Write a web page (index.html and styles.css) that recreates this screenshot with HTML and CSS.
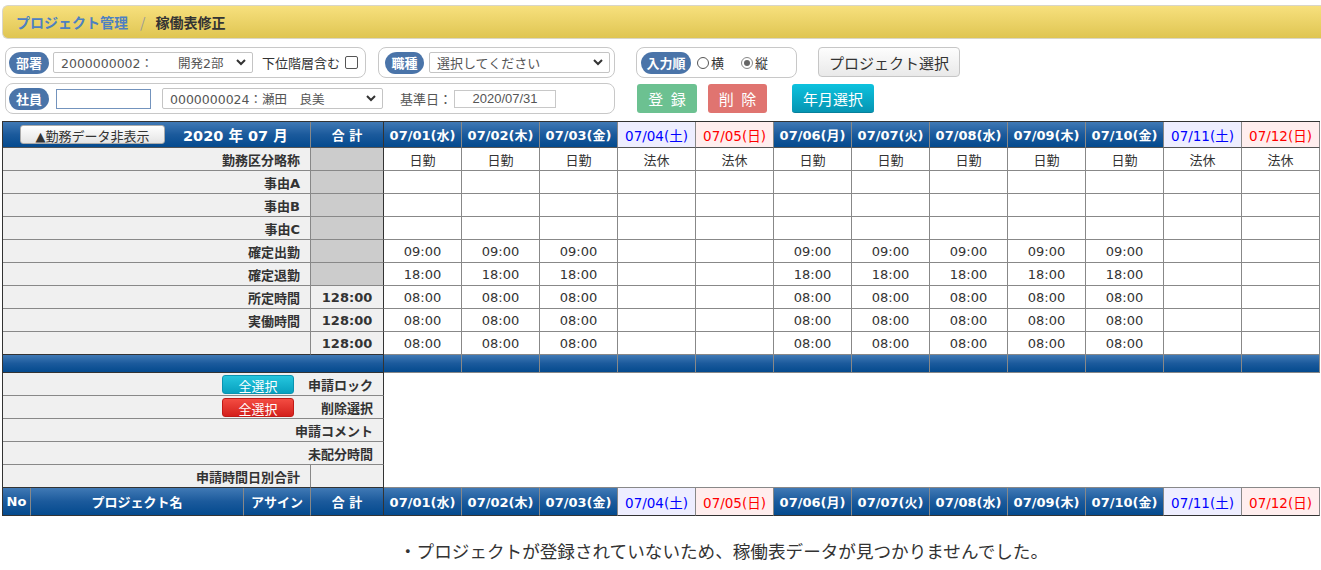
FILE: index.html
```html
<!DOCTYPE html>
<html lang="ja">
<head>
<meta charset="utf-8">
<title>稼働表修正</title>
<link rel="stylesheet" href="styles.css">
</head>
<body>
<div class="page">
  <div class="crumb">
    <span class="crumb-link">プロジェクト管理</span>
    <span class="crumb-sep">/</span>
    <span class="crumb-cur">稼働表修正</span>
  </div>

  <div class="form-row row1">
    <div class="box box-dept">
      <span class="pill">部署</span>
      <div class="select sel-dept"><span>2000000002：　　開発2部</span><svg class="chev" width="10" height="7" viewBox="0 0 10 7"><polyline points="1,1 5,5 9,1" fill="none" stroke="#333" stroke-width="2"/></svg></div>
      <span class="chk-label">下位階層含む</span>
      <span class="checkbox"></span>
    </div>
    <div class="box box-job">
      <span class="pill pill-job">職種</span>
      <div class="select sel-job"><span>選択してください</span><svg class="chev" width="10" height="7" viewBox="0 0 10 7"><polyline points="1,1 5,5 9,1" fill="none" stroke="#333" stroke-width="2"/></svg></div>
    </div>
    <div class="box box-order">
      <span class="pill pill-order">入力順</span>
      <span class="radio"></span><span class="radio-label">横</span>
      <span class="radio radio-on"></span><span class="radio-label">縦</span>
    </div>
    <button class="btn-gray">プロジェクト選択</button>
  </div>

  <div class="form-row row2">
    <div class="box box-emp">
      <span class="pill">社員</span>
      <div class="emp-input"></div>
      <div class="select sel-emp"><span>0000000024：瀬田　良美</span><svg class="chev" width="10" height="7" viewBox="0 0 10 7"><polyline points="1,1 5,5 9,1" fill="none" stroke="#333" stroke-width="2"/></svg></div>
      <span class="base-label">基準日：</span>
      <div class="date-input">2020/07/31</div>
    </div>
    <button class="btn btn-green">登 録</button>
    <button class="btn btn-red">削 除</button>
    <button class="btn btn-teal">年月選択</button>
  </div>

  <table class="grid">
    <colgroup>
      <col class="c-no"><col class="c-name"><col class="c-assign"><col class="c-total">
      <col class="c-day"><col class="c-day"><col class="c-day"><col class="c-day"><col class="c-day"><col class="c-day">
      <col class="c-day"><col class="c-day"><col class="c-day"><col class="c-day"><col class="c-day"><col class="c-day">
    </colgroup>
    <thead>
      <tr class="hdr">
        <th colspan="3" class="hb hdr-left"><div class="hdr-left-inner"><button class="btn-toggle">▲勤務データ非表示</button><span class="ym">2020 年 07 月</span></div></th>
        <th class="hb dk-r">合 計</th>
        <th class="hb">07/01(水)</th><th class="hb">07/02(木)</th><th class="hb">07/03(金)</th>
        <th class="sat">07/04(土)</th><th class="sun">07/05(日)</th>
        <th class="hb">07/06(月)</th><th class="hb">07/07(火)</th><th class="hb">07/08(水)</th>
        <th class="hb">07/09(木)</th><th class="hb">07/10(金)</th>
        <th class="sat">07/11(土)</th><th class="sun">07/12(日)</th>
      </tr>
    </thead>
    <tbody>
      <tr>
        <th colspan="3" class="lbl">勤務区分略称</th><td class="tot gray dk-r"></td>
        <td>日勤</td><td>日勤</td><td>日勤</td><td>法休</td><td>法休</td>
        <td>日勤</td><td>日勤</td><td>日勤</td><td>日勤</td><td>日勤</td><td>法休</td><td>法休</td>
      </tr>
      <tr>
        <th colspan="3" class="lbl">事由A</th><td class="tot gray dk-r"></td>
        <td></td><td></td><td></td><td></td><td></td><td></td><td></td><td></td><td></td><td></td><td></td><td></td>
      </tr>
      <tr>
        <th colspan="3" class="lbl">事由B</th><td class="tot gray dk-r"></td>
        <td></td><td></td><td></td><td></td><td></td><td></td><td></td><td></td><td></td><td></td><td></td><td></td>
      </tr>
      <tr>
        <th colspan="3" class="lbl">事由C</th><td class="tot gray dk-r"></td>
        <td></td><td></td><td></td><td></td><td></td><td></td><td></td><td></td><td></td><td></td><td></td><td></td>
      </tr>
      <tr>
        <th colspan="3" class="lbl">確定出勤</th><td class="tot gray dk-r"></td>
        <td>09:00</td><td>09:00</td><td>09:00</td><td></td><td></td>
        <td>09:00</td><td>09:00</td><td>09:00</td><td>09:00</td><td>09:00</td><td></td><td></td>
      </tr>
      <tr>
        <th colspan="3" class="lbl">確定退勤</th><td class="tot gray dk-r"></td>
        <td>18:00</td><td>18:00</td><td>18:00</td><td></td><td></td>
        <td>18:00</td><td>18:00</td><td>18:00</td><td>18:00</td><td>18:00</td><td></td><td></td>
      </tr>
      <tr>
        <th colspan="3" class="lbl">所定時間</th><td class="tot dk-r">128:00</td>
        <td>08:00</td><td>08:00</td><td>08:00</td><td></td><td></td>
        <td>08:00</td><td>08:00</td><td>08:00</td><td>08:00</td><td>08:00</td><td></td><td></td>
      </tr>
      <tr>
        <th colspan="3" class="lbl">実働時間</th><td class="tot dk-r">128:00</td>
        <td>08:00</td><td>08:00</td><td>08:00</td><td></td><td></td>
        <td>08:00</td><td>08:00</td><td>08:00</td><td>08:00</td><td>08:00</td><td></td><td></td>
      </tr>
      <tr>
        <th colspan="3" class="lbl dk-b"></th><td class="tot dk-r dk-b">128:00</td>
        <td>08:00</td><td>08:00</td><td>08:00</td><td></td><td></td>
        <td>08:00</td><td>08:00</td><td>08:00</td><td>08:00</td><td>08:00</td><td></td><td></td>
      </tr>
      <tr class="bar">
        <td colspan="4" class="hb dk-r dk-b"></td>
        <td class="hb"></td><td class="hb"></td><td class="hb"></td><td class="hb"></td><td class="hb"></td><td class="hb"></td>
        <td class="hb"></td><td class="hb"></td><td class="hb"></td><td class="hb"></td><td class="hb"></td><td class="hb"></td>
      </tr>
      <tr>
        <td colspan="4" class="ctl dk-r"><div class="ctl-inner"><button class="sel-all sel-teal">全選択</button><span class="ctl-label">申請ロック</span></div></td>
        <td colspan="12" rowspan="5" class="blank"></td>
      </tr>
      <tr>
        <td colspan="4" class="ctl dk-r"><div class="ctl-inner"><button class="sel-all sel-red">全選択</button><span class="ctl-label">削除選択</span></div></td>
      </tr>
      <tr>
        <td colspan="4" class="ctl dk-r"><div class="ctl-inner"><span class="ctl-label">申請コメント</span></div></td>
      </tr>
      <tr>
        <td colspan="4" class="ctl dk-r"><div class="ctl-inner"><span class="ctl-label">未配分時間</span></div></td>
      </tr>
      <tr>
        <th colspan="3" class="lbl dk-b">申請時間日別合計</th><td class="tot dk-r dk-b"></td>
      </tr>
      <tr class="hdr2">
        <th class="hb">No</th><th class="hb">プロジェクト名</th><th class="hb">アサイン</th><th class="hb dk-r">合 計</th>
        <th class="hb">07/01(水)</th><th class="hb">07/02(木)</th><th class="hb">07/03(金)</th>
        <th class="sat">07/04(土)</th><th class="sun">07/05(日)</th>
        <th class="hb">07/06(月)</th><th class="hb">07/07(火)</th><th class="hb">07/08(水)</th>
        <th class="hb">07/09(木)</th><th class="hb">07/10(金)</th>
        <th class="sat">07/11(土)</th><th class="sun">07/12(日)</th>
      </tr>
    </tbody>
  </table>

  <p class="msg">・プロジェクトが登録されていないため、稼働表データが見つかりませんでした。</p>
</div>
</body>
</html>
```

FILE: styles.css
```css
* { box-sizing: border-box; }
html, body { margin: 0; padding: 0; background: #fff; }
body {
  font-family: "DejaVu Sans", "Noto Sans CJK JP", sans-serif;
  font-size: 13px;
  color: #333;
}
.page { padding: 5px 0 0 2px; }

/* breadcrumb */
.crumb {
  height: 34px;
  border: 1px solid #d9d6c8;
  border-right: none;
  border-radius: 6px 0 0 6px;
  background: linear-gradient(to bottom, #f7e07d, #dfc552);
  display: flex;
  align-items: center;
  padding-left: 13px;
  font-family: "Noto Sans CJK JP", sans-serif;
  font-weight: bold;
  font-size: 14px;
}
.crumb-link { color: #4d80c2; }
.crumb-sep { color: #9a9a9a; margin: 0 10px 0 12px; font-weight: normal; }
.crumb-cur { color: #333; }

/* form */
.form-row { display: flex; align-items: center; padding-left: 3px; }
.row1 { margin-top: 8px; }
.row2 { margin-top: 5px; }
.box {
  display: flex;
  align-items: center;
  height: 31px;
  border: 1px solid #c8c8c8;
  border-radius: 8px;
  background: #fff;
}
.pill {
  width: 40px;
  height: 22px;
  border-radius: 12px 10px 12px 10px / 11px;
  background: #4a74a9;
  color: #fff;
  font-family: "Noto Sans CJK JP", sans-serif;
  font-weight: bold;
  font-size: 13px;
  display: flex;
  align-items: center;
  justify-content: center;
  flex: none;
}
.select {
  display: flex;
  align-items: center;
  justify-content: space-between;
  height: 21px;
  border: 1px solid #c4c4c4;
  border-radius: 2px;
  padding: 0 6px 0 7px;
  color: #555;
  font-size: 12.5px;
  background: #fff;
  flex: none;
}
.chev { flex: none; }
.box-dept { width: 361px; padding-left: 3px; }
.sel-dept { width: 200px; margin-left: 4px; }
.chk-label { margin-left: 9px; font-family: "Noto Sans CJK JP", sans-serif; color: #333; }
.checkbox {
  width: 13px; height: 13px; margin-left: 5px;
  border: 1px solid #555; border-radius: 2px; background: #fff;
}
.box-job { width: 237px; margin-left: 12px; padding-left: 6px; }
.pill-job { width: 39px; }
.sel-job { width: 181px; margin-left: 5px; font-family: "Noto Sans CJK JP", sans-serif; font-size: 13px; }
.box-order { width: 161px; margin-left: 21px; padding-left: 4px; }
.pill-order { width: 50px; }
.radio {
  width: 12px; height: 12px; margin-left: 6px;
  border: 1px solid #555; border-radius: 50%; background: #fff;
  display: flex; align-items: center; justify-content: center;
}
.radio-on { margin-left: 17px; border-color: #888; }
.radio-on::after { content: ""; width: 6px; height: 6px; border-radius: 50%; background: #666; }
.radio-label { margin-left: 2px; font-family: "Noto Sans CJK JP", sans-serif; }
.btn-gray {
  margin-left: 21px;
  width: 142px; height: 30px;
  align-self: flex-start;
  border: 1px solid #c6c6c6;
  border-radius: 4px;
  background: linear-gradient(to bottom, #fdfdfd, #e9e9e9);
  font-family: "Noto Sans CJK JP", sans-serif;
  font-size: 15px;
  color: #333;
  padding: 0;
}
.box-emp { width: 610px; padding-left: 3px; }
.emp-input {
  width: 95px; height: 20px; margin-left: 7px;
  border: 1px solid #7393bd; background: #fff; flex: none;
}
.sel-emp { width: 221px; margin-left: 11px; }
.base-label { margin-left: 17px; color: #555; font-family: "Noto Sans CJK JP", sans-serif; }
.date-input {
  width: 102px; height: 18px; margin-left: 2px;
  border: 1px solid #c8c8c8; background: #fff;
  font-family: "Liberation Sans", sans-serif; font-size: 13px; color: #555;
  display: flex; align-items: center; justify-content: center;
}
.btn {
  height: 29px;
  border: none;
  border-radius: 3px;
  color: #fff;
  font-family: "Noto Sans CJK JP", sans-serif;
  font-size: 15px;
  padding: 0;
  word-spacing: 4px;
}
.btn-green { width: 60px; margin-left: 22px; background: #6cc191; }
.btn-red { width: 59px; margin-left: 11px; background: #e07470; }
.btn-teal {
  width: 82px; margin-left: 25px;
  background: linear-gradient(to bottom, #0dc2de, #0595b3);
  border-bottom: 1px solid #07809b;
}

/* grid */
.grid {
  margin-top: 7px;
  border-collapse: separate;
  border-spacing: 0;
  table-layout: fixed;
  width: 1318px;
  border-top: 1px solid #333;
  border-left: 1px solid #333;
}
.c-no { width: 28px; }
.c-name { width: 213px; }
.c-assign { width: 67px; }
.c-total { width: 73px; }
.c-day { width: 78px; }
.grid th, .grid td {
  border-right: 1px solid #888;
  border-bottom: 1px solid #888;
  padding: 0;
  height: 23px;
  text-align: center;
  font-weight: normal;
  white-space: nowrap;
  overflow: hidden;
}
.grid td { background: #fff; color: #333; }
.grid .hdr th { height: 26px; border-bottom-color: #555; }
.grid .hdr2 th { height: 28px; border-bottom-color: #333; }
.grid .hb {
  background: linear-gradient(to bottom, #4079b5 0%, #1b5a9c 50%, #044a8e 100%);
  color: #fff;
  font-weight: bold;
}
.grid .sat { background: #eeeeff; color: #0000ff; font-size: 13.5px; }
.grid .sun { background: #ffeeee; color: #ff0000; font-size: 13.5px; }
.grid .bar td { height: 18px; }
.grid .dk-r { border-right-color: #333; }
.grid .dk-b { border-bottom-color: #333; }
.grid .lbl {
  background: #f0f0f0;
  text-align: right;
  padding-right: 10px;
  font-weight: bold;
  color: #333;
  font-family: "DejaVu Sans", "Noto Sans CJK JP", sans-serif;
}
.grid .tot { background: #f0f0f0; font-weight: bold; }
.grid .gray { background: #cccccc; }
.hdr-left-inner { display: flex; align-items: center; padding-left: 17px; }
.btn-toggle {
  width: 145px; height: 19px;
  border: 1px solid #aaa;
  border-radius: 3px;
  background: linear-gradient(to bottom, #ffffff, #e4e4e4);
  font-family: "DejaVu Sans", "Noto Sans CJK JP", sans-serif;
  font-size: 13px;
  color: #333;
  padding: 0;
  font-weight: normal;
}
.ym { margin-left: 18px; font-size: 14.5px; font-weight: bold; color: #fff; }
.grid .ctl { background: #f0f0f0; }
.ctl-inner { display: flex; justify-content: flex-end; align-items: center; }
.sel-all {
  width: 72px; height: 19px;
  border-radius: 3px;
  color: #fff;
  font-family: "Noto Sans CJK JP", sans-serif;
  font-size: 13px;
  padding: 0;
}
.sel-teal { background: linear-gradient(to bottom, #25c6de, #08a1bf); border: 1px solid #0a93b0; }
.sel-red { background: linear-gradient(to bottom, #f34c42, #d4201c); border: 1px solid #c01a16; }
.ctl-label {
  width: 89px;
  padding-right: 10px;
  text-align: right;
  font-weight: bold;
  font-family: "Noto Sans CJK JP", sans-serif;
}
.grid .blank { background: #fff; border-right: none; border-bottom: 1px solid #888; }

/* message */
.msg {
  margin: 22px 0 0 397px;
  font-family: "Noto Sans CJK JP", sans-serif;
  font-size: 17.6px;
  color: #333;
}
```
